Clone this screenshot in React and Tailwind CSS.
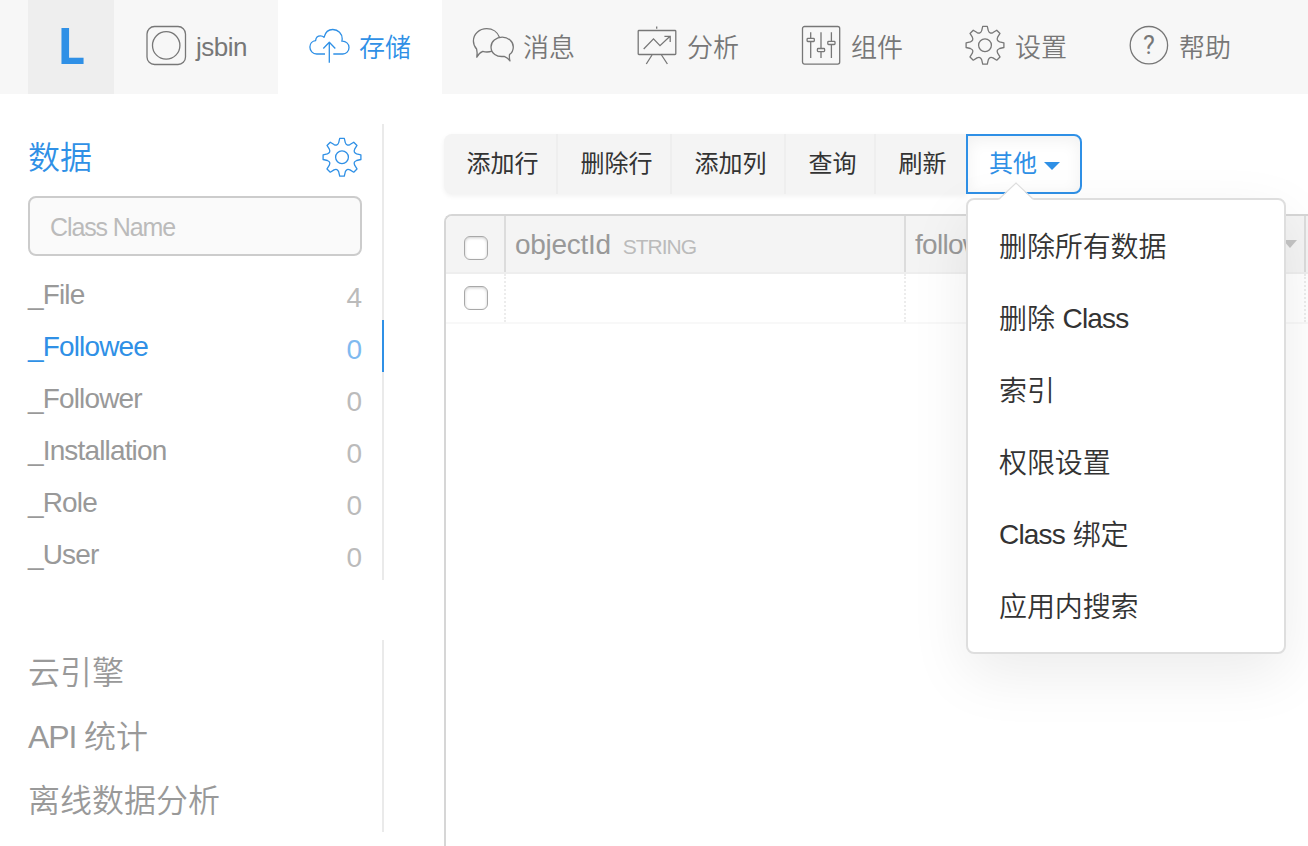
import React from "react";

const point = (cx, cy, angle, r, t) => {
  const x = cx + r * Math.cos(angle) - t * Math.sin(angle);
  const y = cy + r * Math.sin(angle) + t * Math.cos(angle);
  return `${x.toFixed(2)} ${y.toFixed(2)}`;
};

// Outline of a gear with eight rounded-valley teeth.
function gearPath(cx, cy) {
  const parts = [];
  for (let i = 0; i < 8; i++) {
    const a = (i * Math.PI) / 4;
    parts.push(`${i === 0 ? "M" : "L"}${point(cx, cy, a, 18.9, -2.3)}`);
    parts.push(`L${point(cx, cy, a, 18.9, 2.3)}`);
    parts.push(`L${point(cx, cy, a, 14.6, 3.3)}`);
    parts.push(
      `Q${point(cx, cy, a + Math.PI / 8, 12, 0)} ${point(cx, cy, a + Math.PI / 4, 14.6, -3.3)}`
    );
  }
  return parts.join("") + "Z";
}

function Icon({ children, className = "" }) {
  return (
    <svg
      width="44"
      height="44"
      viewBox="0 0 44 44"
      fill="none"
      stroke="currentColor"
      strokeWidth="1.3"
      strokeLinejoin="round"
      className={`shrink-0 ${className}`}
    >
      {children}
    </svg>
  );
}

const AppIcon = () => (
  <Icon>
    <rect x="3" y="2.5" width="38.5" height="38" rx="7.5" />
    <circle cx="22.2" cy="21.4" r="13.7" />
  </Icon>
);

const CloudIcon = () => (
  <Icon>
    <path d="M17 30H8.7C4.6 30 1.9 26.6 1.9 23C1.9 19.6 4.3 16.9 7.6 16.6C7.9 13.6 10 11.9 12.5 11.9C14 11.9 15.1 12.4 16 13.3C17.2 8.6 20.6 5.5 24.8 5.5C30.2 5.5 34.2 9.6 34.2 14.8C34.2 15.7 34.1 16.4 33.8 17.2C38 17 41 19.8 41 23.4C41 27.2 38.3 30 34.8 30H25.3" />
    <path d="M21.3 38.7V18.5M15.3 24.5L21.3 18.3L27.3 24.5" />
  </Icon>
);

const ChatIcon = () => (
  <Icon>
    <path d="M20 27.2C16.5 28.3 13.5 28.2 10.8 27.4C8.2 28.5 6 30.5 4.8 33.2C5.3 30 5.3 27.6 4.6 25C2.5 22.7 1.4 20 1.4 17C1.4 10 7.3 4.6 14.7 4.6C20.6 4.6 25.6 8 27.4 13.2" />
    <path d="M30.2 13.2C36.3 13.2 41.3 17.5 41.3 22.9C41.3 25.8 40 28.6 37.5 30.6C37.2 33 37.4 35 38 37C36.7 35 34.5 33.2 32.2 32.3C24.7 33.4 19 29.3 19 22.9C19 17.5 24.1 13.2 30.2 13.2Z" />
  </Icon>
);

const BoardIcon = () => (
  <Icon>
    <rect x="2.2" y="6.5" width="37.6" height="24" rx="0.8" />
    <path d="M20.7 2.4V4.8M16 31L10.3 40M25.5 31L31.4 40" />
    <path d="M7.7 25L17.5 14.9L24 21.7L34 12.3M28.4 12.3H34.2V18" strokeLinejoin="miter" />
  </Icon>
);

const SlidersIcon = () => (
  <Icon>
    <rect x="2.5" y="2.5" width="37.2" height="37.6" rx="2" />
    <path d="M10.7 8.3V14.3M10.7 17.6V34M21 8.3V24.3M21 27.6V34M31.4 8.3V17.3M31.4 20.6V34" />
    <rect x="7.1" y="14.4" width="7.2" height="3.1" rx="0.8" />
    <rect x="17.4" y="24.5" width="7.2" height="3.1" rx="0.8" />
    <rect x="27.8" y="17.4" width="7.2" height="3.1" rx="0.8" />
  </Icon>
);

const GEAR = gearPath(21, 21.2);
const GearIcon = ({ className }) => (
  <Icon className={className}>
    <path d={GEAR} />
    <circle cx="21" cy="21.2" r="6.4" />
  </Icon>
);

const HelpIcon = () => (
  <Icon>
    <circle cx="20.9" cy="21.2" r="18.7" />
    <text
      x="21"
      y="29.8"
      textAnchor="middle"
      stroke="none"
      fill="currentColor"
      className="font-['Roboto'] text-[25px] font-normal"
    >
      ?
    </text>
  </Icon>
);

const tabs = [
  { label: "jsbin", icon: AppIcon, latin: true },
  { label: "存储", icon: CloudIcon, active: true },
  { label: "消息", icon: ChatIcon },
  { label: "分析", icon: BoardIcon },
  { label: "组件", icon: SlidersIcon },
  { label: "设置", icon: GearIcon },
  { label: "帮助", icon: HelpIcon },
];

function TopBar() {
  return (
    <header className="flex h-[94px] bg-[#f7f7f7] pl-7">
      <div className="flex w-[86px] items-center justify-center bg-[#eeeeee]">
        <span className="pb-1 font-['Open_Sans'] text-[50px] leading-none font-bold text-[#2f90e6]">
          L
        </span>
      </div>
      {tabs.map(({ label, icon: TabIcon, active, latin }) => (
        <a
          key={label}
          className={`flex w-[164px] shrink-0 items-center pb-0.5 pl-[30px] ${
            active ? "bg-white text-[#2f90e6]" : "text-[#777]"
          }`}
        >
          <TabIcon />
          <span
            className={`ml-[7px] text-[26px] leading-[40px] font-[350] whitespace-nowrap ${
              latin ? "pt-0.5 pl-px tracking-[-0.5px]" : "pt-[3px]"
            }`}
          >
            {label}
          </span>
        </a>
      ))}
    </header>
  );
}

const classes = [
  { name: "_File", count: 4 },
  { name: "_Followee", count: 0, active: true },
  { name: "_Follower", count: 0 },
  { name: "_Installation", count: 0 },
  { name: "_Role", count: 0 },
  { name: "_User", count: 0 },
];

function Sidebar() {
  return (
    <aside className="flex w-[384px] shrink-0 flex-col gap-[60px] pt-[30px] pl-7">
      <section className="h-[456px] border-r-2 border-[#eaeaea]">
        <div className="flex h-[72px] items-center justify-between pr-[16.7px]">
          <h2 className="pb-1 text-[32px] leading-[48px] font-[350] text-[#2f90e6]">数据</h2>
          <GearIcon className="mb-1 text-[#2f90e6]" />
        </div>
        <div className="mr-5 flex h-[60px] items-center rounded-lg border-2 border-[#ccc] bg-[#fafafa] px-5 pt-1">
          <input
            className="w-full text-[25px] tracking-[-1.1px] outline-none placeholder:text-[#bbb]"
            placeholder="Class Name"
          />
        </div>
        <ul className="mt-3 -mr-0.5">
          {classes.map(({ name, count, active }) => (
            <li
              key={name}
              className={`flex h-[52px] justify-between border-r-2 pr-5 text-[28px] tracking-[-0.85px] ${
                active ? "border-[#2f90e6] text-[#2f90e6]" : "border-transparent text-[#999]"
              }`}
            >
              <span className="pt-px leading-[52px]">{name}</span>
              <span
                className={`pt-1 leading-[52px] tracking-normal ${
                  active ? "text-[#7fbaf0]" : "text-[#bbb]"
                }`}
              >
                {count}
              </span>
            </li>
          ))}
        </ul>
      </section>
      <nav className="flex h-[192px] flex-col border-r-2 border-[#eaeaea] pt-px text-[32px] font-[350] text-[#999]">
        <a className="h-16 leading-[64px]">云引擎</a>
        <a className="h-16 leading-[64px]">
          <span className="tracking-[-1.1px]">API </span>统计
        </a>
        <a className="h-16 leading-[64px]">离线数据分析</a>
      </nav>
    </aside>
  );
}

const Latin = ({ children }) => (
  <span className="relative -top-px tracking-[-0.8px]">{children}</span>
);

const menuItems = [
  "删除所有数据",
  <>
    删除 <Latin>Class</Latin>
  </>,
  "索引",
  "权限设置",
  <>
    <Latin>Class</Latin> 绑定
  </>,
  "应用内搜索",
];

function MoreMenu() {
  return (
    <div className="absolute top-[62px] -left-0.5 z-10 w-[320px] rounded-lg border-2 border-[#dedede] bg-white pt-3 pb-2 shadow-[0_20px_60px_rgba(0,0,0,0.08)]">
      <svg width="36" height="18" viewBox="0 0 36 18" className="absolute -top-[18px] left-[30px]">
        <path d="M0 18L2 17L18 1L34 17L36 18Z" fill="#fff" />
        <path d="M1 17L18 1L35 17" fill="none" stroke="#dedede" strokeWidth="1.2" />
      </svg>
      {menuItems.map((item, i) => (
        <a
          key={i}
          className="block h-[72px] pl-[31px] text-[28px] leading-[72px] font-[350] tracking-[-0.1px] text-[#333]"
        >
          {item}
        </a>
      ))}
    </div>
  );
}

function Toolbar() {
  return (
    <div className="flex h-[60px] w-[638px]">
      <div className="flex rounded-l-lg bg-[#f4f4f4] text-2xl text-[#333] shadow-[0_2px_5px_rgba(0,0,0,0.06)]">
        {["添加行", "删除行", "添加列", "查询", "刷新"].map((label) => (
          <button
            key={label}
            className="border-r-2 border-[#eeeeee] pr-[17.5px] pl-[22.5px] whitespace-nowrap last:border-transparent"
          >
            {label}
          </button>
        ))}
      </div>
      <div className="relative flex w-[116px] items-center rounded-r-lg border-2 border-[#2f90e6] bg-white pl-[21px] text-2xl text-[#2f90e6] shadow-[inset_0_4px_16px_rgba(0,0,0,0.06)]">
        其他
        <svg width="16" height="8" viewBox="0 0 16 8" className="mt-[3px] ml-[7px]">
          <path d="M0 0H16L8 8Z" fill="currentColor" />
        </svg>
        <MoreMenu />
      </div>
    </div>
  );
}

const Checkbox = () => (
  <span className="block size-6 rounded-[6px] border border-[#a8a8a8] bg-white shadow-[inset_0_1px_3px_rgba(0,0,0,0.2)]" />
);

function DataTable() {
  return (
    <div className="mt-5 grow overflow-hidden rounded-tl-lg border-t-2 border-l-2 border-[#d6d6d6]">
      <div className="flex h-[58px] w-[1000px] border-b-2 border-[#eeeeee] bg-[#f4f4f4] text-[28px] tracking-[-0.3px] text-[#999]">
        <div className="flex w-[60px] items-center border-r-2 border-[#dcdcdc] pt-2 pl-[18px]">
          <Checkbox />
        </div>
        <div className="flex w-[400px] items-baseline border-r-2 border-[#dcdcdc] pl-[9px] leading-[58px]">
          objectId
          <span className="ml-3 text-[21px] tracking-[-1px] text-[#bbb]">STRING</span>
        </div>
        <div className="flex w-[400px] justify-between border-r-2 border-[#dcdcdc] pr-[7px] pl-[9px] leading-[58px]">
          <span className="w-[72px] overflow-hidden tracking-[-0.7px]">follow</span>
          <svg width="14" height="8" viewBox="0 0 14 8" className="mt-6">
            <path d="M0 0H14L7 8Z" fill="#c4c4c4" />
          </svg>
        </div>
      </div>
      <div className="flex h-[50px] w-[1000px] border-b-2 border-[#f8f8f8]">
        <div className="flex w-[60px] items-center border-r-2 border-dotted border-[#ececec] pl-[18px]">
          <Checkbox />
        </div>
        <div className="w-[400px] border-r-2 border-dotted border-[#ececec]" />
        <div className="w-[400px] border-r-2 border-dotted border-[#ececec]" />
      </div>
    </div>
  );
}

export default function App() {
  return (
    <div className="flex h-[846px] w-[1308px] flex-col overflow-hidden bg-white font-['Liberation_Sans','Noto_Sans_CJK_SC',sans-serif]">
      <TopBar />
      <div className="flex grow">
        <Sidebar />
        <main className="ml-[60px] flex min-w-0 grow flex-col pt-10">
          <Toolbar />
          <DataTable />
        </main>
      </div>
    </div>
  );
}
